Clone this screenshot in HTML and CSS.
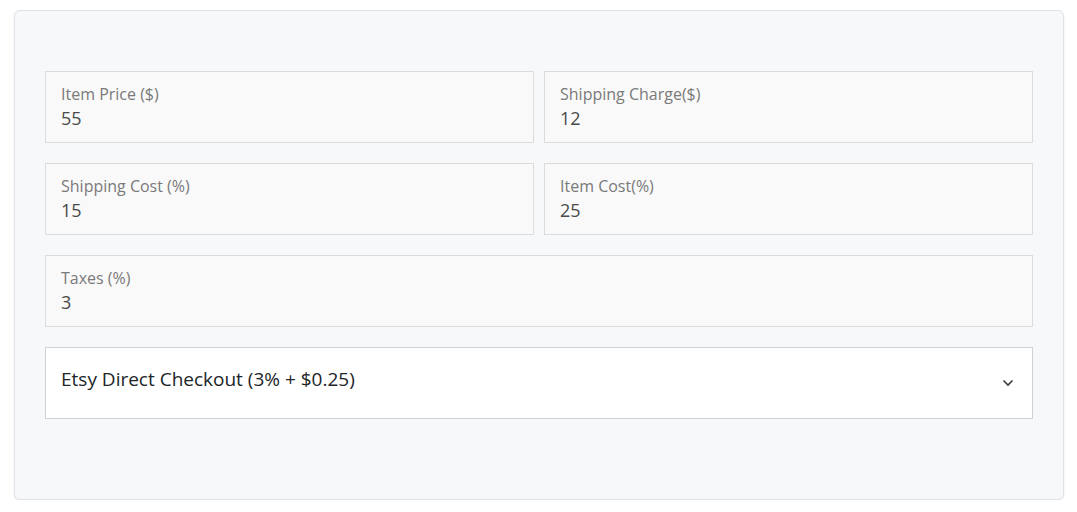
FILE: index.html
```html
<!DOCTYPE html>
<html>
<head>
<meta charset="utf-8">
<link rel="stylesheet" href="styles.css">
</head>
<body>
<div class="card">
  <div class="grid">
    <div class="field">
      <span class="label">Item Price ($)</span>
      <span class="value">55</span>
    </div>
    <div class="field">
      <span class="label">Shipping Charge($)</span>
      <span class="value">12</span>
    </div>
    <div class="field">
      <span class="label">Shipping Cost (%)</span>
      <span class="value">15</span>
    </div>
    <div class="field">
      <span class="label">Item Cost(%)</span>
      <span class="value">25</span>
    </div>
    <div class="field wide">
      <span class="label">Taxes (%)</span>
      <span class="value">3</span>
    </div>
    <div class="select wide">
      <span class="select-text">Etsy Direct Checkout (3% + $0.25)</span>
      <svg class="chevron" width="12" height="8" viewBox="0 0 12 8"><path d="M1.5 1.5 L6 6 L10.5 1.5" fill="none" stroke="#343a40" stroke-width="1.6"/></svg>
    </div>
  </div>
</div>
</body>
</html>
```
FILE: styles.css
```css
html, body { margin: 0; padding: 0; background: #fff; }
body {
  font-family: "Open Sans", "Noto Sans", sans-serif;
  padding: 10px 13px 0 14px;
}
.card {
  box-sizing: border-box;
  width: 1050px;
  height: 490px;
  background: #f7f8fa;
  border: 1px solid #dfe3e8;
  border-radius: 6px;
  box-shadow: 0 1px 3px rgba(0,0,0,0.08);
  padding: 60px 30px 0 30px;
}
.grid {
  display: grid;
  grid-template-columns: 489px 489px;
  column-gap: 10px;
  row-gap: 20px;
}
.wide { grid-column: 1 / span 2; }
.field {
  box-sizing: border-box;
  height: 72px;
  background: #f9f9f9;
  border: 1px solid #dcdcdc;
  padding: 11px 15px 0 15px;
  display: flex;
  flex-direction: column;
}
.label {
  font-size: 16px;
  line-height: 22px;
  color: #7a7a7a;
}
.value {
  font-size: 18px;
  line-height: 26px;
  color: #4a4a4a;
}
.select {
  box-sizing: border-box;
  height: 72px;
  background: #fff;
  border: 1px solid #ced2d8;
  padding: 0 18px 0 15px;
  display: flex;
  align-items: center;
  justify-content: space-between;
}
.select-text {
  font-size: 19px;
  color: #212529;
  margin-top: -8px;
}
.chevron { margin-top: 0; }
```
